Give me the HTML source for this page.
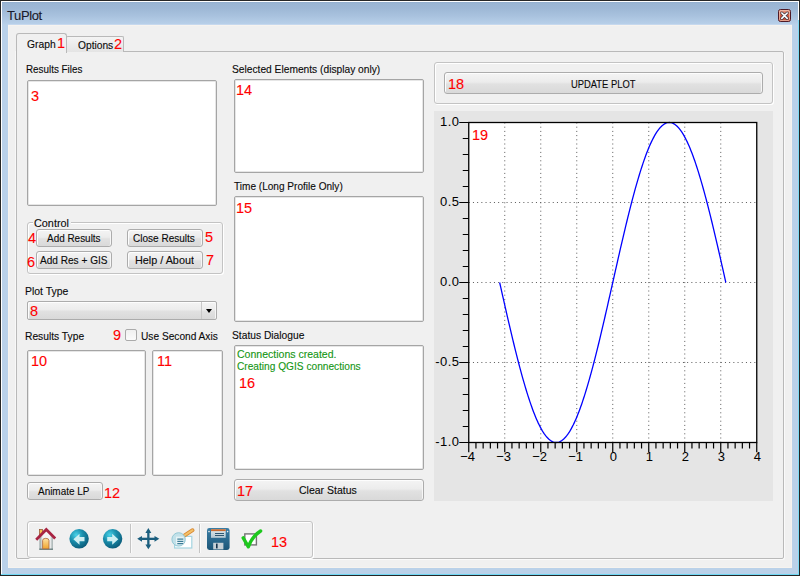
<!DOCTYPE html>
<html><head><meta charset="utf-8"><style>
*{margin:0;padding:0;box-sizing:border-box}
html,body{width:800px;height:576px;overflow:hidden;background:#262626}
body{position:relative;font-family:"Liberation Sans",sans-serif;font-size:11px;color:#1a1a1a}
.a{position:absolute}
.t{position:absolute;white-space:pre;font-size:11px;line-height:13px;color:#0a0a0a;-webkit-text-stroke:0.12px currentColor}
.red{position:absolute;white-space:pre;font-size:14.5px;line-height:15px;color:#ff0000;-webkit-text-stroke:0.1px #ff0000}
.box{position:absolute;background:#fff;border:1px solid #a5a5a5;border-radius:2px;box-shadow:inset 0 0 0 1px #e6e6e6}
.btn{position:absolute;border:1px solid #acacac;border-radius:3px;background:linear-gradient(#f4f4f4,#ececec 45%,#e1e1e1 55%,#d9d9d9);box-shadow:inset 1px 1px 0 #fdfdfd,inset -1px 0 0 #f6f6f6}
.grp{position:absolute;border:1px solid #c3c3c3;border-radius:3px;box-shadow:inset 1px 1px 0 #fff,1px 1px 0 #fff}
</style></head><body>
<div class="a" style="left:1px;top:1px;width:798px;height:574px;background:#ffffff"></div>
<div class="a" style="left:798px;top:20px;width:1px;height:555px;background:#7ddcf6"></div>
<div class="a" style="left:1px;top:574px;width:798px;height:1px;background:#6fd8f4"></div>
<div class="a" style="left:2px;top:2px;width:796px;height:572px;background:linear-gradient(#8eaacb 0px,#9ab5d3 1px,#9db7d5 6px,#a9c2de 14px,#b9d1ea 23px,#bad1e9 100%)"></div>
<div class="a" style="left:8px;top:24px;width:784px;height:1px;background:#c6d8ee"></div>
<div class="a" style="left:8px;top:25px;width:784px;height:543px;background:#f0f0f0;border:1px solid #f6f3ef"></div>
<div class="t" style="left:7px;top:8px;font-size:13px;line-height:15px;letter-spacing:-0.4px;color:#1a1a2a">TuPlot</div>
<svg class="a" style="left:777px;top:8px" width="15" height="15" viewBox="0 0 15 15"><defs><linearGradient id="cg" x1="0" y1="0" x2="0" y2="1"><stop offset="0" stop-color="#e9a590"/><stop offset="0.5" stop-color="#d0573c"/><stop offset="1" stop-color="#c44a30"/></linearGradient></defs><rect x="1.5" y="1.5" width="12" height="12" rx="2" fill="url(#cg)" stroke="#4f1a26" stroke-width="1"/><rect x="2.5" y="2.5" width="10" height="10" rx="1" fill="none" stroke="#f2c4b4" stroke-opacity="0.7" stroke-width="1"/><path d="M4.8 5 L10.2 10.4 M10.2 5 L4.8 10.4" stroke="#3a3a48" stroke-width="3" stroke-linecap="round"/><path d="M4.8 5 L10.2 10.4 M10.2 5 L4.8 10.4" stroke="#fff" stroke-width="1.6" stroke-linecap="round"/></svg>

<div class="a" style="left:16px;top:51px;width:768px;height:508px;border:1px solid #b9b9b9;border-radius:0 2px 2px 2px;background:#f0f0f0;box-shadow:1px 1px 0 #fafafa,-1px 0 0 #f8f8f8"></div>
<div class="a" style="left:66px;top:36px;width:58px;height:16px;border:1px solid #b9b9b9;border-bottom:none;border-radius:2px 2px 0 0;background:linear-gradient(#f4f4f4,#e4e4e4)"></div>
<div class="a" style="left:16px;top:33px;width:51px;height:20px;border:1px solid #b9b9b9;border-bottom:none;border-radius:3px 3px 0 0;background:#f0f0f0"></div>

<div class="box" style="left:27px;top:80px;width:190px;height:126px"></div>
<div class="grp" style="left:27px;top:222px;width:196px;height:52px"></div>
<div class="a" style="left:33px;top:221px;width:38px;height:3px;background:#f0f0f0"></div>
<div class="btn" style="left:36px;top:229px;width:76px;height:18px"></div>
<div class="btn" style="left:127px;top:229px;width:76px;height:18px"></div>
<div class="btn" style="left:36px;top:251px;width:76px;height:18px"></div>
<div class="btn" style="left:127px;top:251px;width:76px;height:18px"></div>
<div class="btn" style="left:27px;top:301px;width:190px;height:19px;border-radius:2px"></div>
<div class="a" style="left:201px;top:302px;width:1px;height:17px;background:#c8c8c8"></div>
<div class="a" style="left:206px;top:309px;width:0;height:0;border-left:3.5px solid transparent;border-right:3.5px solid transparent;border-top:4px solid #000"></div>
<div class="a" style="left:125px;top:329px;width:12px;height:12px;border:1px solid #aaaaaa;border-radius:2px;background:linear-gradient(#f0f0f0,#fbfbfb)"></div>
<div class="box" style="left:27px;top:350px;width:119px;height:126px"></div>
<div class="box" style="left:152px;top:350px;width:71px;height:126px"></div>
<div class="btn" style="left:27px;top:482px;width:76px;height:18px"></div>

<div class="box" style="left:234px;top:79px;width:190px;height:94px"></div>
<div class="box" style="left:234px;top:196px;width:190px;height:126px"></div>
<div class="box" style="left:234px;top:345px;width:190px;height:125px"></div>
<div class="btn" style="left:234px;top:479px;width:190px;height:22px"></div>

<div class="grp" style="left:434px;top:62px;width:339px;height:42px"></div>
<div class="btn" style="left:444px;top:72px;width:319px;height:22px"></div>
<div class="a" style="left:434px;top:111px;width:339px;height:390px;background:#e5e5e5"></div>
<svg class="a" style="left:0;top:0" width="800" height="576" viewBox="0 0 800 576"><rect x="468.75" y="122.5" width="288.0" height="320.0" fill="#fff"/><path d="M504.75 122.5V442.5 M540.75 122.5V442.5 M576.75 122.5V442.5 M612.75 122.5V442.5 M648.75 122.5V442.5 M684.75 122.5V442.5 M720.75 122.5V442.5 M468.75 202.50H756.75 M468.75 282.50H756.75 M468.75 362.50H756.75" stroke="#5a5a5a" stroke-width="1" stroke-dasharray="1,3.2" fill="none"/><polyline points="499.65,282.50 500.60,286.69 501.54,290.87 502.48,295.05 503.42,299.22 504.37,303.38 505.31,307.53 506.25,311.66 507.19,315.77 508.13,319.85 509.08,323.91 510.02,327.94 510.96,331.94 511.90,335.91 512.85,339.84 513.79,343.73 514.73,347.58 515.67,351.38 516.62,355.14 517.56,358.85 518.50,362.50 519.44,366.10 520.39,369.64 521.33,373.12 522.27,376.55 523.21,379.90 524.16,383.19 525.10,386.41 526.04,389.56 526.98,392.64 527.93,395.64 528.87,398.56 529.81,401.40 530.75,404.16 531.70,406.84 532.64,409.44 533.58,411.94 534.52,414.36 535.47,416.69 536.41,418.92 537.35,421.06 538.29,423.11 539.24,425.06 540.18,426.91 541.12,428.67 542.06,430.32 543.01,431.87 543.95,433.32 544.89,434.67 545.83,435.91 546.78,437.05 547.72,438.08 548.66,439.00 549.60,439.82 550.55,440.53 551.49,441.13 552.43,441.62 553.37,442.01 554.32,442.28 555.26,442.45 556.20,442.50 557.14,442.45 558.09,442.28 559.03,442.01 559.97,441.62 560.91,441.13 561.86,440.53 562.80,439.82 563.74,439.00 564.68,438.08 565.63,437.05 566.57,435.91 567.51,434.67 568.45,433.32 569.40,431.87 570.34,430.32 571.28,428.67 572.22,426.91 573.17,425.06 574.11,423.11 575.05,421.06 575.99,418.92 576.94,416.69 577.88,414.36 578.82,411.94 579.76,409.44 580.71,406.84 581.65,404.16 582.59,401.40 583.53,398.56 584.48,395.64 585.42,392.64 586.36,389.56 587.30,386.41 588.25,383.19 589.19,379.90 590.13,376.55 591.07,373.12 592.02,369.64 592.96,366.10 593.90,362.50 594.84,358.85 595.79,355.14 596.73,351.38 597.67,347.58 598.61,343.73 599.56,339.84 600.50,335.91 601.44,331.94 602.38,327.94 603.33,323.91 604.27,319.85 605.21,315.77 606.15,311.66 607.10,307.53 608.04,303.38 608.98,299.22 609.92,295.05 610.87,290.87 611.81,286.69 612.75,282.50 613.69,278.31 614.63,274.13 615.58,269.95 616.52,265.78 617.46,261.62 618.40,257.47 619.35,253.34 620.29,249.23 621.23,245.15 622.17,241.09 623.12,237.06 624.06,233.06 625.00,229.09 625.94,225.16 626.89,221.27 627.83,217.42 628.77,213.62 629.71,209.86 630.66,206.15 631.60,202.50 632.54,198.90 633.48,195.36 634.43,191.88 635.37,188.45 636.31,185.10 637.25,181.81 638.20,178.59 639.14,175.44 640.08,172.36 641.02,169.36 641.97,166.44 642.91,163.60 643.85,160.84 644.79,158.16 645.74,155.56 646.68,153.06 647.62,150.64 648.56,148.31 649.51,146.08 650.45,143.94 651.39,141.89 652.33,139.94 653.28,138.09 654.22,136.33 655.16,134.68 656.10,133.13 657.05,131.68 657.99,130.33 658.93,129.09 659.87,127.95 660.82,126.92 661.76,126.00 662.70,125.18 663.64,124.47 664.59,123.87 665.53,123.38 666.47,122.99 667.41,122.72 668.36,122.55 669.30,122.50 670.24,122.55 671.18,122.72 672.13,122.99 673.07,123.38 674.01,123.87 674.95,124.47 675.90,125.18 676.84,126.00 677.78,126.92 678.72,127.95 679.67,129.09 680.61,130.33 681.55,131.68 682.49,133.13 683.44,134.68 684.38,136.33 685.32,138.09 686.26,139.94 687.21,141.89 688.15,143.94 689.09,146.08 690.03,148.31 690.98,150.64 691.92,153.06 692.86,155.56 693.80,158.16 694.75,160.84 695.69,163.60 696.63,166.44 697.57,169.36 698.52,172.36 699.46,175.44 700.40,178.59 701.34,181.81 702.29,185.10 703.23,188.45 704.17,191.88 705.11,195.36 706.06,198.90 707.00,202.50 707.94,206.15 708.88,209.86 709.83,213.62 710.77,217.42 711.71,221.27 712.65,225.16 713.60,229.09 714.54,233.06 715.48,237.06 716.42,241.09 717.37,245.15 718.31,249.23 719.25,253.34 720.19,257.47 721.13,261.62 722.08,265.78 723.02,269.95 723.96,274.13 724.90,278.31 725.85,282.50" stroke="#0000ff" stroke-width="1.3" fill="none"/><rect x="468.75" y="122.5" width="288.0" height="320.0" fill="none" stroke="#000" stroke-width="1.3"/><path d="M459.25 442.50H468.75 M462.75 426.50H468.75 M462.75 410.50H468.75 M462.75 394.50H468.75 M462.75 378.50H468.75 M459.25 362.50H468.75 M462.75 346.50H468.75 M462.75 330.50H468.75 M462.75 314.50H468.75 M462.75 298.50H468.75 M459.25 282.50H468.75 M462.75 266.50H468.75 M462.75 250.50H468.75 M462.75 234.50H468.75 M462.75 218.50H468.75 M459.25 202.50H468.75 M462.75 186.50H468.75 M462.75 170.50H468.75 M462.75 154.50H468.75 M462.75 138.50H468.75 M459.25 122.50H468.75 M468.75 442.5V452.20 M475.95 442.5V448.50 M483.15 442.5V448.50 M490.35 442.5V448.50 M497.55 442.5V448.50 M504.75 442.5V452.20 M511.95 442.5V448.50 M519.15 442.5V448.50 M526.35 442.5V448.50 M533.55 442.5V448.50 M540.75 442.5V452.20 M547.95 442.5V448.50 M555.15 442.5V448.50 M562.35 442.5V448.50 M569.55 442.5V448.50 M576.75 442.5V452.20 M583.95 442.5V448.50 M591.15 442.5V448.50 M598.35 442.5V448.50 M605.55 442.5V448.50 M612.75 442.5V452.20 M619.95 442.5V448.50 M627.15 442.5V448.50 M634.35 442.5V448.50 M641.55 442.5V448.50 M648.75 442.5V452.20 M655.95 442.5V448.50 M663.15 442.5V448.50 M670.35 442.5V448.50 M677.55 442.5V448.50 M684.75 442.5V452.20 M691.95 442.5V448.50 M699.15 442.5V448.50 M706.35 442.5V448.50 M713.55 442.5V448.50 M720.75 442.5V452.20 M727.95 442.5V448.50 M735.15 442.5V448.50 M742.35 442.5V448.50 M749.55 442.5V448.50 M756.75 442.5V452.20" stroke="#000" stroke-width="1.2" fill="none"/><g font-family="Liberation Sans" font-size="13" fill="#000"><text x="459.6" y="126.20" text-anchor="end" letter-spacing="0.5">1.0</text><text x="459.6" y="206.20" text-anchor="end" letter-spacing="0.5">0.5</text><text x="459.6" y="286.20" text-anchor="end" letter-spacing="0.5">0.0</text><text x="459.6" y="366.20" text-anchor="end" letter-spacing="0.5">-0.5</text><text x="459.6" y="446.20" text-anchor="end" letter-spacing="0.5">-1.0</text><text x="467.55" y="461" text-anchor="middle">−4</text><text x="503.55" y="461" text-anchor="middle">−3</text><text x="539.55" y="461" text-anchor="middle">−2</text><text x="575.55" y="461" text-anchor="middle">−1</text><text x="613.35" y="461" text-anchor="middle">0</text><text x="649.35" y="461" text-anchor="middle">1</text><text x="685.35" y="461" text-anchor="middle">2</text><text x="721.35" y="461" text-anchor="middle">3</text><text x="757.35" y="461" text-anchor="middle">4</text></g></svg>

<div class="grp" style="left:27px;top:521px;width:286px;height:37px"></div>
<svg class="a" style="left:0;top:0" width="800" height="576" viewBox="0 0 800 576">
<defs>
<radialGradient id="tg" cx="0.35" cy="0.3" r="0.75"><stop offset="0" stop-color="#4ad2e8"/><stop offset="0.45" stop-color="#1a8fad"/><stop offset="1" stop-color="#0b5a78"/></radialGradient>
<linearGradient id="door" x1="0" y1="0" x2="0" y2="1"><stop offset="0" stop-color="#fde2a4"/><stop offset="1" stop-color="#f0a42c"/></linearGradient>
<linearGradient id="body" x1="0" y1="0" x2="1" y2="0"><stop offset="0" stop-color="#8c9c9c"/><stop offset="0.25" stop-color="#f4f4f4"/><stop offset="0.8" stop-color="#f4f4f4"/><stop offset="1" stop-color="#98a6a6"/></linearGradient>
<linearGradient id="fl" x1="0" y1="0" x2="0" y2="1"><stop offset="0" stop-color="#3a7ea6"/><stop offset="1" stop-color="#1c5678"/></linearGradient>
<linearGradient id="lab" x1="0" y1="0" x2="0" y2="1"><stop offset="0" stop-color="#dde7ec"/><stop offset="1" stop-color="#b4c8d2"/></linearGradient>
</defs>
<rect x="130" y="524" width="1" height="29" fill="#c4c4c4"/><rect x="131" y="524" width="1" height="29" fill="#fafafa"/>
<rect x="199" y="524" width="1" height="29" fill="#c4c4c4"/><rect x="200" y="524" width="1" height="29" fill="#fafafa"/>
<!-- home -->
<rect x="39.5" y="529.5" width="3" height="6" fill="#f6c050" stroke="#9a5a3a" stroke-width="0.8"/>
<path d="M39.5 536 L46.3 530.5 L52.8 536 V549.5 H39.5 Z" fill="url(#body)"/>
<rect x="39.3" y="548.6" width="13.6" height="1.2" fill="#587070"/>
<path d="M42.6 548.8 V540.5 Q42.6 538.3 45.8 538.3 Q49 538.3 49 540.5 V548.8 Z" fill="url(#door)" stroke="#a8643a" stroke-width="0.8"/>
<path d="M36.2 539.8 L46.3 529.6 L55.2 538.6" fill="none" stroke="#a82442" stroke-width="2.8" stroke-linejoin="miter"/>
<!-- back -->
<circle cx="79.1" cy="538.8" r="9.7" fill="url(#tg)"/>
<path d="M73.4 539.2 L79.5 533.7 V537 H84.5 V541.2 H79.5 V544.7 Z" fill="#cdeef2"/>
<!-- forward -->
<circle cx="112.6" cy="538.8" r="9.7" fill="url(#tg)"/>
<path d="M118.3 539.2 L112.2 533.7 V537 H107.2 V541.2 H112.2 V544.7 Z" fill="#cdeef2"/>
<!-- move -->
<g fill="#1b5e7e">
<rect x="139.5" y="537.7" width="17.6" height="2.3"/>
<rect x="147.2" y="530.5" width="2.3" height="16.6"/>
<path d="M148.35 528.1 L151.3 532.9 H145.4 Z"/>
<path d="M148.35 549.3 L151.3 544.5 H145.4 Z"/>
<path d="M137.2 538.85 L142 535.9 V541.8 Z"/>
<path d="M159.3 538.85 L154.5 535.9 V541.8 Z"/>
</g>
<!-- zoom -->
<rect x="174.6" y="536.4" width="17.2" height="11.6" fill="#fff" stroke="#a4d4e0" stroke-width="1.2"/>
<path d="M184.6 535.4 L192.6 530.2" stroke="#d88a34" stroke-width="3.8" stroke-linecap="round"/>
<path d="M184.6 535.4 L192.6 530.2" stroke="#f4c068" stroke-width="2" stroke-linecap="round"/>
<circle cx="178.6" cy="539.4" r="6.7" fill="#c2e1e9" stroke="#94c8d6" stroke-width="1"/>
<rect x="176" y="536.6" width="7.6" height="8" fill="#e6f3f6"/>
<g fill="#3c7c96"><rect x="177.3" y="538.5" width="6" height="1.2"/><rect x="177.3" y="540.8" width="6" height="1.2"/><rect x="177.3" y="543" width="6" height="1.2"/></g>
<!-- save -->
<rect x="207" y="528" width="22.6" height="22" rx="2.4" fill="url(#fl)"/>
<rect x="211" y="529.2" width="14.7" height="8.6" fill="url(#lab)"/>
<rect x="211" y="529.2" width="14.7" height="1.9" fill="#c86a30"/>
<rect x="215" y="533" width="9" height="0.9" fill="#1e4a66"/>
<rect x="215" y="535.1" width="9" height="0.9" fill="#1e4a66"/>
<circle cx="209" cy="531.6" r="0.8" fill="#f0f0f0"/>
<circle cx="227.6" cy="531.6" r="0.8" fill="#f0f0f0"/>
<rect x="213.2" y="542.8" width="10.2" height="6.6" fill="#c6d0d6"/>
<rect x="216" y="543.6" width="1.6" height="4.8" fill="#13304a"/>
<!-- check -->
<rect x="244.8" y="533.9" width="11.6" height="11" fill="#fff" stroke="#747474" stroke-width="1.4"/>
<path d="M243.2 537.9 L248.4 546.8 Q252 536.5 260.6 531" fill="none" stroke="#1ec81e" stroke-width="3.4" stroke-linecap="round" stroke-linejoin="round"/>
</svg>

<div class="t" style="left:27.00px;top:38px;transform:scaleX(0.9367);transform-origin:0 0;">Graph</div>
<div class="t" style="left:78.00px;top:39px;transform:scaleX(0.9289);transform-origin:0 0;">Options</div>
<div class="t" style="left:26.10px;top:63px;transform:scaleX(0.8952);transform-origin:0 0;">Results Files</div>
<div class="t" style="left:34.01px;top:217px;transform:scaleX(0.9853);transform-origin:0 0;">Control</div>
<div class="t" style="left:47.00px;top:232px;transform:scaleX(0.9034);transform-origin:0 0;">Add Results</div>
<div class="t" style="left:133.09px;top:232px;transform:scaleX(0.9119);transform-origin:0 0;">Close Results</div>
<div class="t" style="left:40.00px;top:254px;transform:scaleX(0.9164);transform-origin:0 0;">Add Res + GIS</div>
<div class="t" style="left:135.02px;top:254px;transform:scaleX(0.9831);transform-origin:0 0;">Help / About</div>
<div class="t" style="left:25.05px;top:285px;transform:scaleX(0.9477);transform-origin:0 0;">Plot Type</div>
<div class="t" style="left:25.07px;top:330px;transform:scaleX(0.9323);transform-origin:0 0;">Results Type</div>
<div class="t" style="left:141.08px;top:330px;transform:scaleX(0.9232);transform-origin:0 0;">Use Second Axis</div>
<div class="t" style="left:38.00px;top:485px;transform:scaleX(0.9036);transform-origin:0 0;">Animate LP</div>
<div class="t" style="left:232.07px;top:63px;transform:scaleX(0.9291);transform-origin:0 0;">Selected Elements (display only)</div>
<div class="t" style="left:234.00px;top:180px;transform:scaleX(0.9153);transform-origin:0 0;">Time (Long Profile Only)</div>
<div class="t" style="left:232.07px;top:329px;transform:scaleX(0.9316);transform-origin:0 0;">Status Dialogue</div>
<div class="t" style="left:237.04px;top:348px;transform:scaleX(0.9569);transform-origin:0 0;color:#149614">Connections created.</div>
<div class="t" style="left:237.08px;top:360px;transform:scaleX(0.9233);transform-origin:0 0;color:#149614">Creating QGIS connections</div>
<div class="t" style="left:299.05px;top:484px;transform:scaleX(0.9534);transform-origin:0 0;">Clear Status</div>
<div class="t" style="left:571.15px;top:78px;transform:scaleX(0.8527);transform-origin:0 0;">UPDATE PLOT</div>
<div class="red" style="left:57px;top:36px">1</div>
<div class="red" style="left:114px;top:37px">2</div>
<div class="red" style="left:31px;top:89px">3</div>
<div class="red" style="left:28px;top:231px">4</div>
<div class="red" style="left:205px;top:230px">5</div>
<div class="red" style="left:27px;top:255px">6</div>
<div class="red" style="left:206px;top:253px">7</div>
<div class="red" style="left:30px;top:304px">8</div>
<div class="red" style="left:113px;top:328px">9</div>
<div class="red" style="left:31px;top:354px">10</div>
<div class="red" style="left:157px;top:354px">11</div>
<div class="red" style="left:104px;top:486px">12</div>
<div class="red" style="left:271px;top:535px">13</div>
<div class="red" style="left:236px;top:83px">14</div>
<div class="red" style="left:236px;top:201px">15</div>
<div class="red" style="left:239px;top:376px">16</div>
<div class="red" style="left:237px;top:484px">17</div>
<div class="red" style="left:448px;top:77px">18</div>
<div class="red" style="left:472px;top:128px">19</div>
</body></html>
